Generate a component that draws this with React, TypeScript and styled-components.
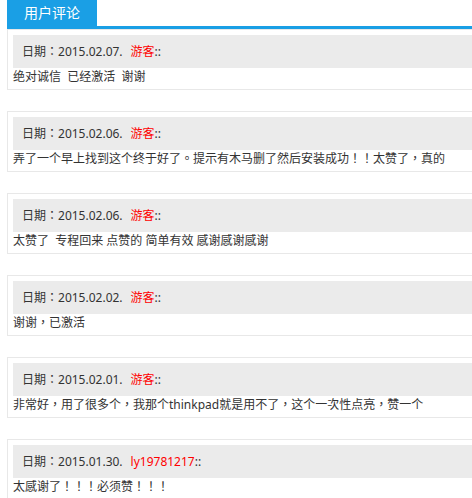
import React from 'react';
import styled, { createGlobalStyle } from 'styled-components';

interface CommentI {
  date: string;
  author: string;
  content: string;
}

const comments: CommentI[] = [
  { date: '2015.02.07.', author: '游客', content: '绝对诚信  已经激活  谢谢' },
  {
    date: '2015.02.06.',
    author: '游客',
    content: '弄了一个早上找到这个终于好了。提示有木马删了然后安装成功！！太赞了，真的',
  },
  { date: '2015.02.06.', author: '游客', content: '太赞了  专程回来 点赞的 简单有效 感谢感谢感谢' },
  { date: '2015.02.02.', author: '游客', content: '谢谢，已激活' },
  {
    date: '2015.02.01.',
    author: '游客',
    content: '非常好，用了很多个，我那个thinkpad就是用不了，这个一次性点亮，赞一个',
  },
  { date: '2015.01.30.', author: 'ly19781217', content: '太感谢了！！！必须赞！！！' },
];

const GlobalStyle = createGlobalStyle`
  html, body {
    margin: 0;
    padding: 0;
    background: #ffffff;
    overflow: hidden;
  }
  body {
    font-family: "Noto Sans", "Noto Sans CJK TC", sans-serif;
    color: #333333;
  }
`;

const Page = styled.div`
  width: 100%;
  overflow: hidden;
`;

const Wrapper = styled.div`
  padding-left: 7px;
  width: 500px;
`;

const TabBar = styled.div`
  display: flex;
  border-bottom: 3px solid #1a9fe5;
`;

const Tab = styled.div`
  width: 90px;
  height: 26px;
  line-height: 26px;
  text-align: center;
  background: #1a9fe5;
  color: #ffffff;
  font-size: 14px;
`;

const List = styled.div`
  display: flex;
  flex-direction: column;
  gap: 21px;
`;

const Card = styled.div`
  border: 1px solid #e8e8e8;
  padding: 5px 0 3px 5px;
`;

const CardHeader = styled.div`
  height: 33px;
  line-height: 33px;
  padding-left: 9px;
  background: #ebebeb;
  font-size: 12px;
  color: #333333;
  white-space: nowrap;
`;

const Author = styled.span`
  margin-left: 8px;
  color: #ff0000;
`;

const CardBody = styled.div`
  height: 18px;
  line-height: 18px;
  font-size: 12px;
  color: #333333;
  white-space: pre;
`;

const CommentItem = (props: CommentI) => {
  const { date, author, content } = props;

  return (
    <Card>
      <CardHeader>
        日期：{date}
        <Author>{author}</Author>::
      </CardHeader>
      <CardBody>{content}</CardBody>
    </Card>
  );
};

const App = () => {
  return (
    <Page>
      <GlobalStyle />
      <Wrapper>
        <TabBar>
          <Tab>用户评论</Tab>
        </TabBar>
        <List>
          {comments.map((c, i) => (
            <CommentItem key={i} {...c} />
          ))}
        </List>
      </Wrapper>
    </Page>
  );
};

export default App;
